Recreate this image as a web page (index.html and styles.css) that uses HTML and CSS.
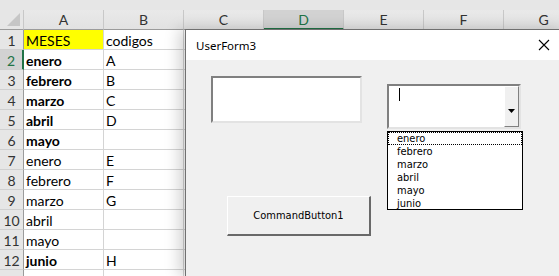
FILE: index.html
```html
<!DOCTYPE html>
<html lang="es">
<head>
  <meta charset="UTF-8">
  <title>UserForm3</title>
  <link rel="stylesheet" href="styles.css">
</head>
<body>
  <div class="sheet">
    <div class="grid">
      <div class="corner"><span class="tri"></span></div>
      <div class="col-head">A</div>
      <div class="col-head">B</div>
      <div class="col-head">C</div>
      <div class="col-head sel">D</div>
      <div class="col-head">E</div>
      <div class="col-head">F</div>
      <div class="col-head">G</div>

      <div class="row-head">1</div><div class="cell yellow">MESES</div><div class="cell">codigos</div><div class="cell"></div><div class="cell"></div><div class="cell"></div><div class="cell"></div><div class="cell"></div>
      <div class="row-head sel">2</div><div class="cell b">enero</div><div class="cell">A</div><div class="cell"></div><div class="cell"></div><div class="cell"></div><div class="cell"></div><div class="cell"></div>
      <div class="row-head">3</div><div class="cell b">febrero</div><div class="cell">B</div><div class="cell"></div><div class="cell"></div><div class="cell"></div><div class="cell"></div><div class="cell"></div>
      <div class="row-head">4</div><div class="cell b">marzo</div><div class="cell">C</div><div class="cell"></div><div class="cell"></div><div class="cell"></div><div class="cell"></div><div class="cell"></div>
      <div class="row-head">5</div><div class="cell b">abril</div><div class="cell">D</div><div class="cell"></div><div class="cell"></div><div class="cell"></div><div class="cell"></div><div class="cell"></div>
      <div class="row-head">6</div><div class="cell b">mayo</div><div class="cell"></div><div class="cell"></div><div class="cell"></div><div class="cell"></div><div class="cell"></div><div class="cell"></div>
      <div class="row-head">7</div><div class="cell">enero</div><div class="cell">E</div><div class="cell"></div><div class="cell"></div><div class="cell"></div><div class="cell"></div><div class="cell"></div>
      <div class="row-head">8</div><div class="cell">febrero</div><div class="cell">F</div><div class="cell"></div><div class="cell"></div><div class="cell"></div><div class="cell"></div><div class="cell"></div>
      <div class="row-head">9</div><div class="cell">marzo</div><div class="cell">G</div><div class="cell"></div><div class="cell"></div><div class="cell"></div><div class="cell"></div><div class="cell"></div>
      <div class="row-head">10</div><div class="cell">abril</div><div class="cell"></div><div class="cell"></div><div class="cell"></div><div class="cell"></div><div class="cell"></div><div class="cell"></div>
      <div class="row-head">11</div><div class="cell">mayo</div><div class="cell"></div><div class="cell"></div><div class="cell"></div><div class="cell"></div><div class="cell"></div><div class="cell"></div>
      <div class="row-head">12</div><div class="cell b">junio</div><div class="cell">H</div><div class="cell"></div><div class="cell"></div><div class="cell"></div><div class="cell"></div><div class="cell"></div>
      <div class="row-head"></div><div class="cell"></div><div class="cell"></div><div class="cell"></div><div class="cell"></div><div class="cell"></div><div class="cell"></div><div class="cell"></div>
    </div>

    <!-- the userform window floats over the sheet -->
    <div class="form">
      <div class="form-title">
        <span>UserForm3</span>
        <div class="close">
          <svg width="12" height="12" viewBox="0 0 12 12"><path d="M1 1 L11 11 M11 1 L1 11" stroke="#000" stroke-width="1.1" fill="none"/></svg>
        </div>
      </div>
      <div class="form-body">
        <div class="textbox"></div>
        <div class="combo">
          <div class="combo-field"><span class="caret"></span></div>
          <div class="combo-btn">
            <svg width="7" height="4" viewBox="0 0 7 4"><path d="M0 0 H7 L3.5 4 Z" fill="#000"/></svg>
          </div>
        </div>
        <ul class="list">
          <li class="focus">enero</li>
          <li>febrero</li>
          <li>marzo</li>
          <li>abril</li>
          <li>mayo</li>
          <li>junio</li>
        </ul>
        <button class="cmd">CommandButton1</button>
      </div>
    </div>
  </div>
</body>
</html>
```

FILE: styles.css
```css
body {
  margin: 0;
  width: 559px;
  height: 276px;
  overflow: hidden;
  background: #fff;
  font-family: Lato, "Liberation Sans", sans-serif;
}

.sheet {
  position: relative;
  height: 276px;
  overflow: hidden;
  padding-top: 10px;
  background: #e6e6e6;
  box-sizing: border-box;
}

.grid {
  display: grid;
  grid-template-columns: 24px repeat(7, 80px);
  grid-auto-rows: 20px;
}

.corner {
  position: relative;
  background: #e6e6e6;
  border-right: 1px solid #c8c8c8;
  border-bottom: 1px solid #9b9b9b;
}

.corner .tri {
  position: absolute;
  right: 3px;
  bottom: 3px;
  width: 0;
  height: 0;
  border-left: 13px solid transparent;
  border-bottom: 13px solid #c6c6c6;
}

.col-head {
  background: linear-gradient(#e9e9e9, #e2e2e2);
  border-right: 1px solid #c8c8c8;
  border-bottom: 1px solid #9b9b9b;
  color: #333;
  font-size: 14px;
  text-align: center;
  line-height: 20px;
}

.col-head.sel {
  background: #d2d2d2;
  color: #217346;
  border-bottom: 2px solid #217346;
}

.row-head {
  background: #e6e6e6;
  border-right: 1px solid #9b9b9b;
  border-bottom: 1px solid #d0d0d0;
  color: #333;
  font-size: 14px;
  text-align: center;
  line-height: 21px;
}

.row-head.sel {
  background: #d2d2d2;
  color: #217346;
  border-right: 2px solid #217346;
}

.cell {
  background: #fff;
  border-right: 1px solid #d4d4d4;
  border-bottom: 1px solid #d4d4d4;
  padding-left: 2px;
  font-size: 14px;
  line-height: 21px;
  color: #000;
  white-space: nowrap;
}

.cell.b {
  font-weight: bold;
}

.cell.yellow {
  background: #ffff00;
}

/* form window */
.form {
  position: absolute;
  left: 185px;
  top: 29px;
  width: 381px;
  height: 247px;
  border: 1px solid #707070;
  border-bottom: none;
  background: #f0f0f0;
  box-shadow: -6px 0 14px rgba(0, 0, 0, 0.18);
  font-family: "DejaVu Sans Condensed", "Liberation Sans", sans-serif;
}

.form-title {
  display: flex;
  justify-content: space-between;
  align-items: center;
  height: 30px;
  padding-left: 10px;
  background: #fff;
  font-family: "Noto Sans", "Open Sans", sans-serif;
  font-size: 11.5px;
  color: #000;
}

.close {
  display: flex;
  justify-content: center;
  align-items: center;
  width: 46px;
  height: 30px;
}

.form-body {
  position: relative;
  height: 217px;
}

.textbox {
  position: absolute;
  left: 25px;
  top: 16px;
  width: 151px;
  height: 47px;
  box-sizing: border-box;
  background: #fff;
  border-top: 2px solid #808080;
  border-left: 2px solid #808080;
  border-right: 2px solid #e3e3e3;
  border-bottom: 2px solid #e3e3e3;
}

.combo {
  position: absolute;
  left: 201px;
  top: 24px;
  width: 134px;
  height: 45px;
  box-sizing: border-box;
  display: flex;
  background: #fff;
  border-top: 2px solid #808080;
  border-left: 2px solid #808080;
  border-right: 2px solid #e3e3e3;
  border-bottom: 2px solid #e3e3e3;
}

.combo-field {
  flex: 1;
  position: relative;
}

.caret {
  position: absolute;
  left: 10px;
  top: 2px;
  width: 1px;
  height: 13px;
  background: #000;
}

.combo-btn {
  display: flex;
  justify-content: center;
  align-items: center;
  padding-top: 8px;
  width: 15px;
  box-sizing: border-box;
  background: #f0f0f0;
  border-top: 1px solid #fff;
  border-left: 1px solid #fff;
  border-right: 1px solid #808080;
  border-bottom: 1px solid #808080;
}

.list {
  position: absolute;
  left: 201px;
  top: 71px;
  width: 136px;
  height: 79px;
  box-sizing: border-box;
  margin: 0;
  padding: 0;
  list-style: none;
  background: #fff;
  border: 1px solid #000;
  font-size: 11px;
  color: #000;
}

.list li {
  height: 13px;
  line-height: 13px;
  padding-left: 9px;
}

.list li.focus {
  outline: 1px dotted #000;
  outline-offset: -1px;
}

.cmd {
  position: absolute;
  left: 41px;
  top: 136px;
  width: 144px;
  height: 40px;
  box-sizing: border-box;
  background: #f0f0f0;
  border-top: 1px solid #fff;
  border-left: 1px solid #fff;
  border-right: 2px solid #696969;
  border-bottom: 2px solid #696969;
  font-family: "DejaVu Sans Condensed", "Liberation Sans", sans-serif;
  font-size: 11px;
  color: #000;
  padding: 0;
}
```
